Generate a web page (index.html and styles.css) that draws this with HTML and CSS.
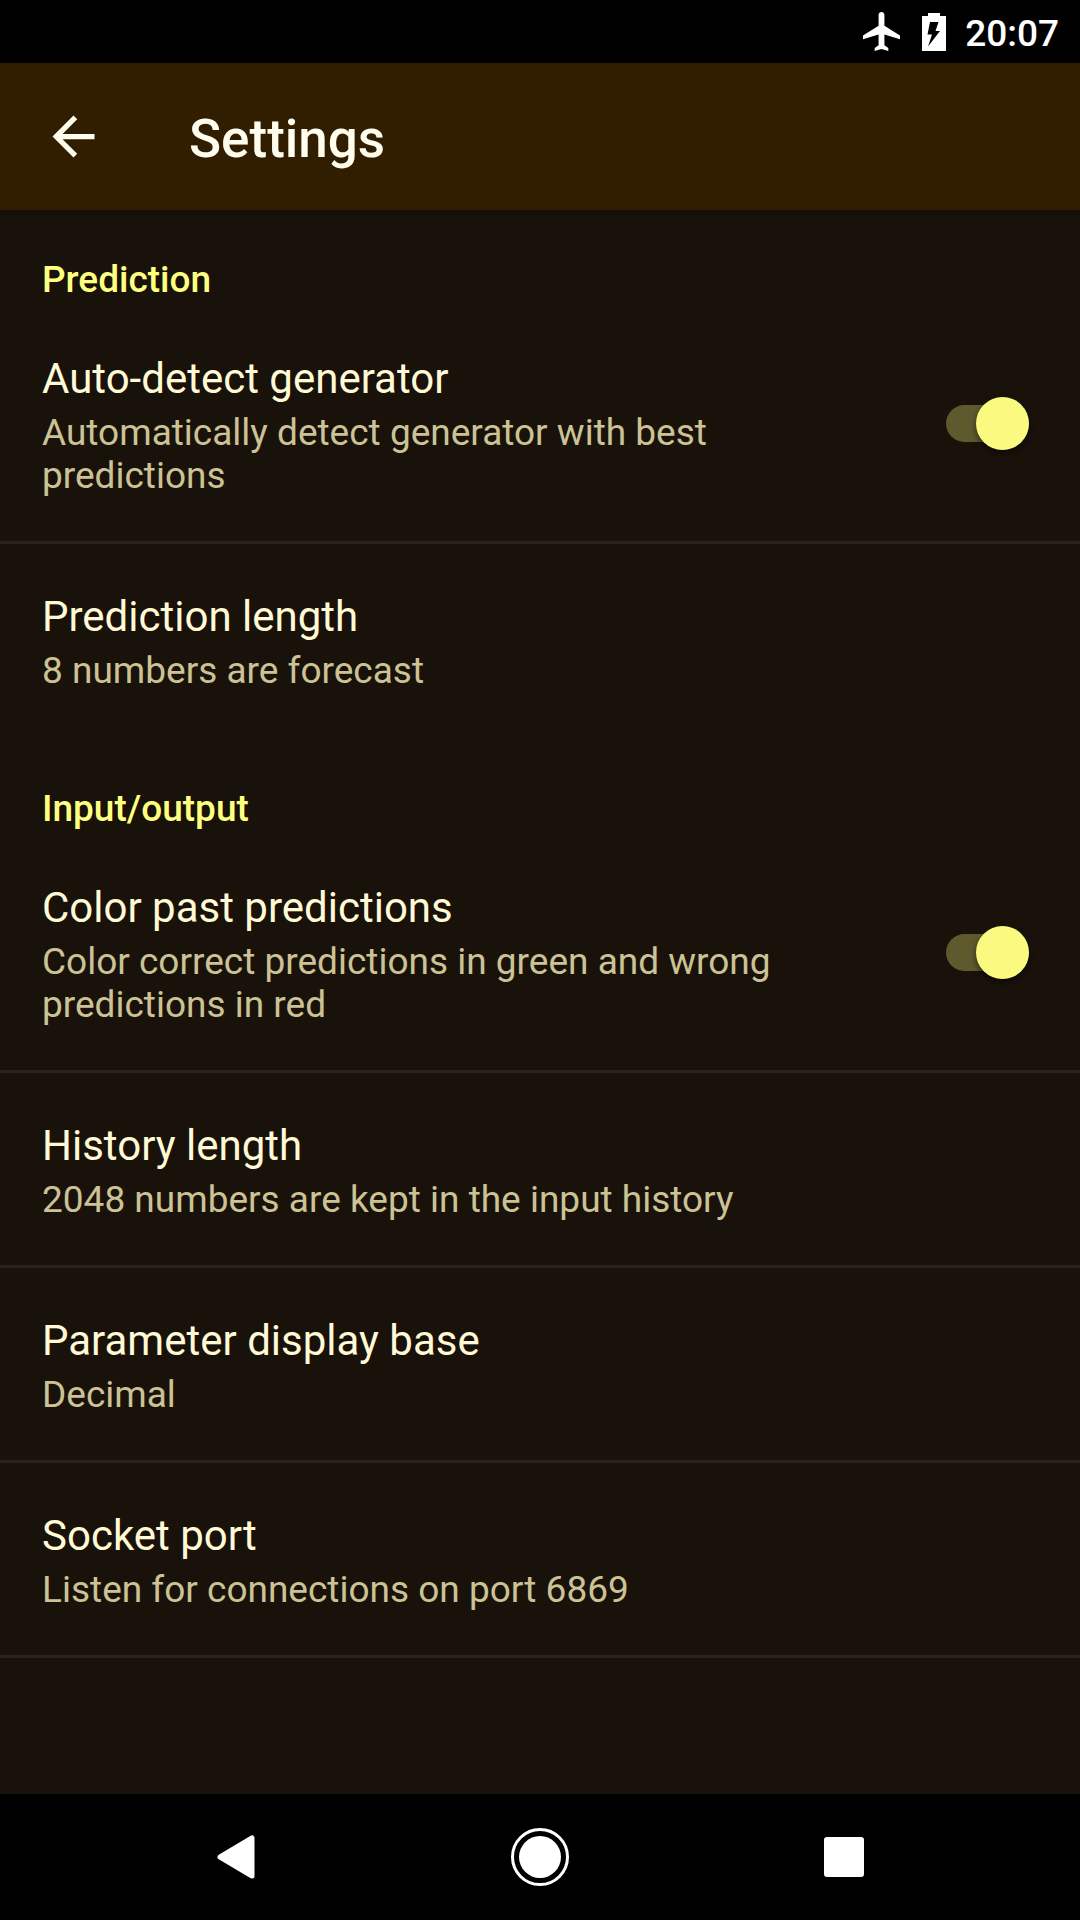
FILE: index.html
```html
<!DOCTYPE html>
<html lang="en">
<head>
<meta charset="utf-8">
<title>Settings</title>
<link rel="stylesheet" href="styles.css">
</head>
<body>
<div class="status">
  <svg class="plane" width="37" height="39" viewBox="2 2 19 20"><path d="M21 16v-2l-8-5V3.500c0-.83-.67-1.500-1.500-1.500S10 2.670 10 3.500V9l-8 5v2l8-2.500V19l-2 1.500V22l3.500-1 3.500 1v-1.500L13 19v-5.500l8 2.500z"/></svg>
  <svg class="battery" width="24" height="38" viewBox="0 0 24 38"><path fill-rule="evenodd" d="M6 0h12v3h6v35H0V3h6zM8 9l-2.500 12.500H10L6 33.500 18 18h-4.500L16.500 9z"/></svg>
  <span class="clock">20:07</span>
</div>
<header class="bar">
  <svg class="back" width="63" height="63" viewBox="0 0 24 24"><path d="M20 11H7.830l5.590-5.590L12 4l-8 8 8 8 1.410-1.410L7.830 13H20v-2z"/></svg>
  <h1>Settings</h1>
</header>
<main>
  <section>
    <h2>Prediction</h2>
    <div class="item tall ruled">
      <div class="text"><h3>Auto-detect generator</h3><p>Automatically detect generator with best<br>predictions</p></div>
      <div class="switch"><i class="thumb"></i></div>
    </div>
    <div class="item">
      <div class="text"><h3>Prediction length</h3><p>8 numbers are forecast</p></div>
    </div>
  </section>
  <section>
    <h2>Input/output</h2>
    <div class="item tall ruled">
      <div class="text"><h3>Color past predictions</h3><p>Color correct predictions in green and wrong<br>predictions in red</p></div>
      <div class="switch"><i class="thumb"></i></div>
    </div>
    <div class="item ruled">
      <div class="text"><h3>History length</h3><p>2048 numbers are kept in the input history</p></div>
    </div>
    <div class="item ruled">
      <div class="text"><h3>Parameter display base</h3><p>Decimal</p></div>
    </div>
    <div class="item ruled">
      <div class="text"><h3>Socket port</h3><p>Listen for connections on port 6869</p></div>
    </div>
  </section>
</main>
<nav class="nav">
  <svg width="1080" height="126" viewBox="0 0 1080 126">
    <path d="M220 63 L252 44 V82 Z" stroke="#fff" stroke-width="5" stroke-linejoin="round"/>
    <circle cx="540" cy="63" r="27.500" class="ring"/>
    <circle cx="540" cy="63" r="21"/>
    <rect x="824" y="43" width="40" height="40" rx="3"/>
  </svg>
</nav>
</body>
</html>
```

FILE: styles.css
```css
* { box-sizing: border-box; margin: 0; padding: 0; }
body {
  width: 1080px;
  height: 1920px;
  display: flex;
  flex-direction: column;
  overflow: hidden;
  background: #19120a;
  font-family: Roboto, sans-serif;
}
svg { display: block; fill: #fff; flex: none; }
.status {
  height: 63px;
  padding-right: 21px;
  display: flex;
  align-items: center;
  justify-content: flex-end;
  background: #000;
}
.battery { margin: 0 19px 0 22px; }
.clock { color: #fff; font-size: 37px; font-weight: 500; line-height: 44px; padding-top: 5px; }
.bar {
  height: 147px;
  padding-left: 42px;
  display: flex;
  align-items: center;
  background: #311e00;
}
.back { fill: #fffdee; }
h1 { margin-left: 84px; color: #fffdee; font-size: 53px; font-weight: 500; line-height: 62px; padding-top: 4px; }
main { flex: 1; background: linear-gradient(#13100a, #19120a 18px); }
h2 {
  height: 112px;
  padding: 49px 42px 0;
  color: #ffff80;
  font-size: 37px;
  font-weight: 500;
  line-height: 42px;
}
.item {
  height: 195px;
  padding: 48px 51px 0 42px;
  display: flex;
  justify-content: space-between;
}
.tall { height: 222px; padding-top: 32px; }
.ruled { border-bottom: 3px solid #2a231b; }
h3 { color: #fff9d6; font-size: 42px; font-weight: 400; line-height: 50px; }
p { margin-top: 7px; color: #ccc295; font-size: 37px; font-weight: 400; line-height: 43px; }
.switch {
  display: flex;
  justify-content: flex-end;
  align-items: center;
  width: 83px;
  height: 37px;
  margin-top: 51px;
  border-radius: 19px;
  background: #5f5a2e;
}
.thumb { width: 53px; height: 53px; border-radius: 50%; background: #fafa80; box-shadow: 0 3px 6px #0008; }
.nav { height: 126px; background: #000; }
.ring { fill: none; stroke: #fff; stroke-width: 3; }
```
